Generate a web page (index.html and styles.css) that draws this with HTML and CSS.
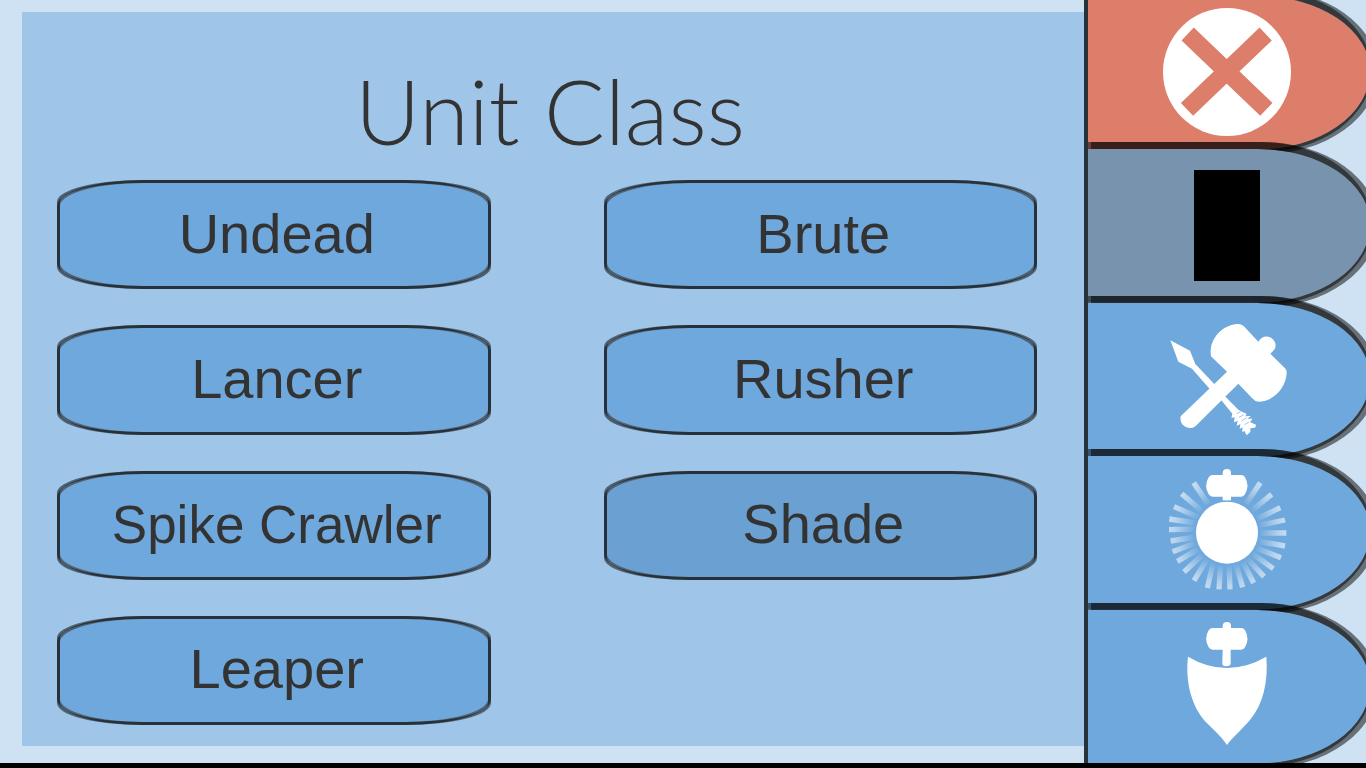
FILE: index.html
```html
<!DOCTYPE html>
<html lang="en">
<head>
<meta charset="utf-8">
<title>Unit Class</title>
<link rel="stylesheet" href="styles.css">
</head>
<body>
<svg class="defs" aria-hidden="true">
  <symbol id="tab-shape" viewBox="0 0 278 153" preserveAspectRatio="none" overflow="visible">
    <path fill="currentColor" d="M0 0H170A112 75 0 0 1 282 75A112 78 0 0 1 170 153H0Z"/>
    <path fill="#000" fill-opacity=".5" d="M164 -7H174A116 82 0 0 1 290 75A116 83 0 0 1 174 158L170 153A112 78 0 0 0 282 75A112 75 0 0 0 170 0H164Z"/>
    <path fill="#000" fill-opacity=".5" d="M164 -7H172A112 82 0 0 1 284 75A112 81 0 0 1 172 156L170 153A112 78 0 0 0 282 75A112 75 0 0 0 170 0H164Z"/>
  </symbol>
  <symbol id="hammer-head" viewBox="0 0 126 84" overflow="visible">
    <path d="M50 18V13Q50 0 63 0T75 13V18H106Q113 18 117 25Q132 50 117 76Q113 83 106 83H20Q13 83 8 76Q-7 50 8 25Q13 18 20 18Z"/>
  </symbol>
</svg>
<div class="screen">
  <main class="panel">
    <h1 class="title">Unit Class</h1>
    <div class="classes">
      <button class="unit">Undead</button>
      <button class="unit">Brute</button>
      <button class="unit">Lancer</button>
      <button class="unit">Rusher</button>
      <button class="unit unit-long">Spike Crawler</button>
      <button class="unit unit-active">Shade</button>
      <button class="unit">Leaper</button>
    </div>
  </main>
  <nav class="tabs" aria-label="Sections">
    <button class="tab tab-close" aria-label="Close">
      <svg class="tab-bg"><use href="#tab-shape"/></svg>
      <svg class="icon" viewBox="0 0 462 450">
        <circle cx="231" cy="222" r="192" fill="#fff"/>
        <path d="M113 108L349 334M347 108L111 334" stroke="currentColor" stroke-width="53"/>
      </svg>
    </button>
    <button class="tab tab-current" aria-label="Unit class">
      <svg class="tab-bg"><use href="#tab-shape"/></svg>
      <svg class="icon" viewBox="0 0 462 450"><path fill="#000" d="M132 57H330V390H132Z"/></svg>
    </button>
    <button class="tab" aria-label="Weapons">
      <svg class="tab-bg"><use href="#tab-shape"/></svg>
      <svg class="icon" viewBox="0 -16 462 450" fill="#fff">
        <path d="M61 90L120 121L136 161L190 218L225 258L266 299L290 311L286 318L303 317L292 325L308 325L300 335L319 344L315 352L301 354L301 365L290 375L283 362L276 365L278 351L269 356L271 341L260 347L263 332L252 336L254 321L244 323L247 310L214 270L176 232L126 175L85 154Z"/>
        <path d="M231 184L183 138C175 91 212 46 260 41Q273 40 281 47L325 94C336 77 349 76 363 82C377 90 381 108 372 119L361 130L405 174Q411 179 410 188C408 234 369 274 325 274Q314 273 306 263L265 220L137 347Q128 356 115 352C98 348 89 335 92 318Z"/>
        <path fill="none" stroke="#6fa8dc" stroke-width="2" d="M260 310L272 304M267 321L281 313M275 332L290 322M284 343L297 335"/>
      </svg>
    </button>
    <button class="tab" aria-label="Aura">
      <svg class="tab-bg"><use href="#tab-shape"/></svg>
      <svg class="icon" viewBox="0 -6 462 450" fill="#fff">
        <radialGradient id="ray" gradientUnits="userSpaceOnUse" cx="231" cy="218" r="178">
          <stop offset=".54" stop-color="#fff" stop-opacity="0"/>
          <stop offset=".88" stop-color="#fff" stop-opacity=".5"/>
          <stop offset="1" stop-color="#fff" stop-opacity=".6"/>
        </radialGradient>
        <path fill="none" stroke="url(#ray)" stroke-width="16" d="M331 68L288 132M365 103L298 158M391 143L314 180M405 180L323 197M409 219L325 219M405 258L321 243M393 293L313 262M370 326L300 276M342 350L285 288M311 369L276 301M278 382L256 306M240 388L237 308M207 388L212 308M172 384L190 306M132 362L172 297M102 336L160 282M82 304L154 262M68 275L143 246M62 243L138 231M57 209L137 207M58 177L136 189M72 140L148 173M95 101L158 155M131 68L174 132"/>
        <circle cx="231" cy="218" r="93"/>
        <use href="#hammer-head" x="168" y="27" width="126" height="84"/>
        <path d="M218 105H243V121H218Z"/>
      </svg>
    </button>
    <button class="tab" aria-label="Defense">
      <svg class="tab-bg"><use href="#tab-shape"/></svg>
      <svg class="icon" viewBox="0 5 462 450" fill="#fff">
        <use href="#hammer-head" x="168" y="38" width="126" height="84"/>
        <path d="M218 116H242V162Q242 171 229 171T217 162Z"/>
        <path d="M114 142Q230 210 349 142C355 215 340 285 300 332C270 366 245 387 231 407C223 393 200 369 176 346C126 300 105 220 114 142Z"/>
      </svg>
    </button>
  </nav>
</div>
</body>
</html>
```
FILE: styles.css
```css
*,
*::before,
*::after {
  box-sizing: border-box;
}

body {
  margin: 0;
  background: #cfe2f3;
  color: #333;
  font-family: "Liberation Sans", Arial, sans-serif;
}

button {
  border: 0;
  padding: 0;
  background: none;
  color: inherit;
  font: inherit;
  cursor: pointer;
}

.defs {
  position: absolute;
  width: 0;
  height: 0;
}

.screen {
  display: flex;
  height: 100vh;
  overflow: hidden;
  border-bottom: 5px solid #000;
}

.panel {
  flex: 1;
  display: flex;
  flex-direction: column;
  margin: 12px 0 17px 22px;
  padding: 0 47px 21px 35px;
  background: #9fc5e8;
}

.title {
  display: flex;
  align-items: center;
  justify-content: center;
  height: 168px;
  margin: 0;
  padding: 28px 0 0 6px;
  font-family: Lato, sans-serif;
  font-size: 90px;
  font-weight: 300;
  line-height: 1;
}

.classes {
  flex: 1;
  display: grid;
  grid-template-columns: 1fr 1fr;
  grid-auto-rows: 1fr;
  gap: 36px 113px;
}

.unit {
  position: relative;
  isolation: isolate;
  padding: 0 0 2px 6px;
  font-size: 56px;
  line-height: 1;
}

.unit::before,
.unit::after {
  content: "";
  position: absolute;
  z-index: -1;
  inset: 0;
  border: 3px solid rgba(0, 0, 0, 0.5);
}

.unit::before {
  border-radius: 87px / 26px;
  background: #6fa8dc padding-box;
}

.unit::after {
  border-radius: 84px / 22px;
}

.unit-long {
  font-size: 53px;
}

.unit-active::before {
  background-color: #6ba0d2;
}

.tabs {
  display: flex;
  flex-direction: column;
  width: 282px;
  margin-top: -4px;
  border-left: 4px solid #27323b;
}

.tab {
  position: relative;
  flex: 1;
  display: flex;
  align-items: center;
  justify-content: center;
  color: #6fa8dc;
}

.tab + .tab::before {
  content: "";
  position: absolute;
  top: -7px;
  left: 0;
  width: 164px;
  height: 7px;
  border-left: 3px solid rgba(0, 0, 0, 0.5);
  background: rgba(0, 0, 0, 0.75) padding-box;
}

.tab-close {
  color: #dd7e6b;
}

.tab-current {
  color: #7893ae;
}

.tab-bg {
  position: absolute;
  inset: 0;
  width: 100%;
  height: 100%;
  overflow: visible;
}

.icon {
  position: relative;
  width: 154px;
  height: 150px;
}
```
